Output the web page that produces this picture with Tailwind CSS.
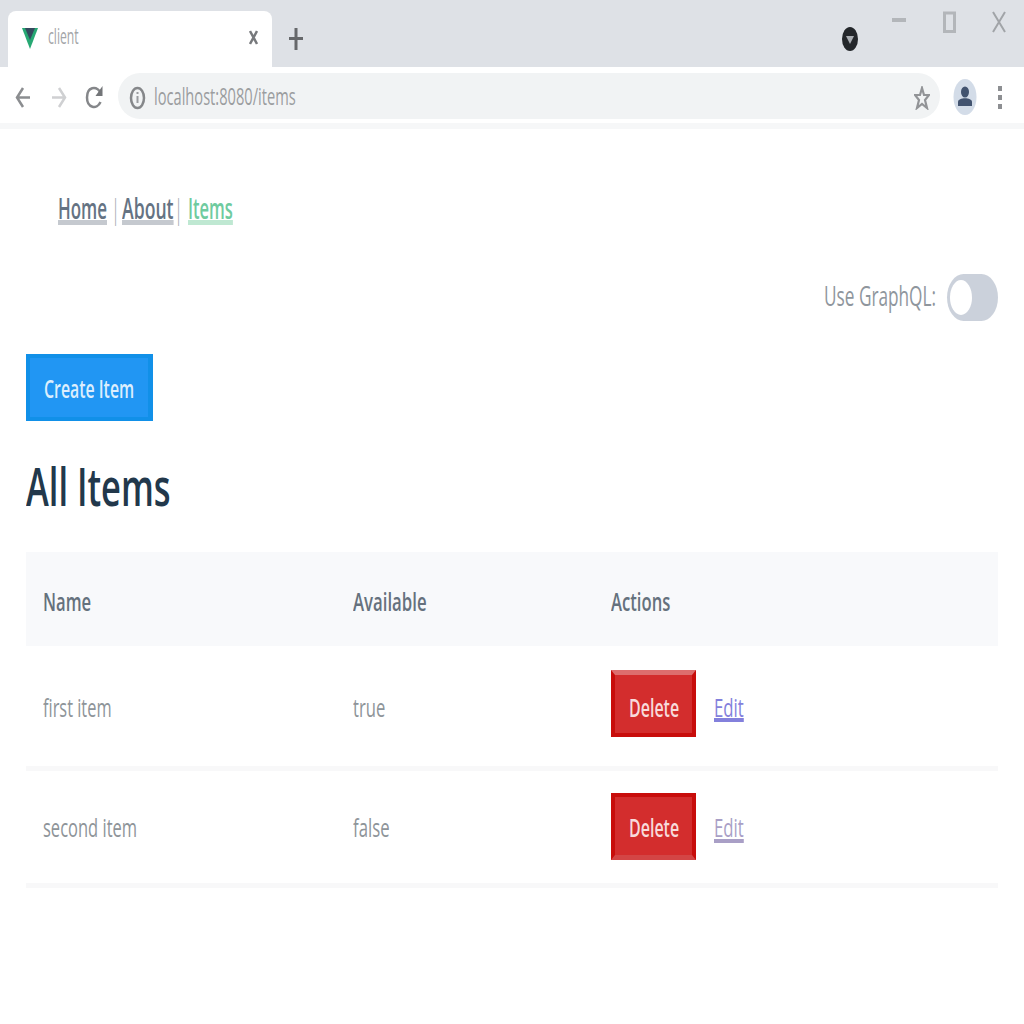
<!DOCTYPE html>
<html lang="en">
<head>
<meta charset="utf-8">
<title>client</title>
<script src="https://cdn.jsdelivr.net/npm/@tailwindcss/browser@4"></script>
</head>
<body class="w-[1024px] h-[1024px] overflow-hidden bg-white font-['Open_Sans',sans-serif] text-[#2c3e50] whitespace-nowrap">
<header>
  <div class="h-[67px] bg-[#dee1e6] flex items-start">
    <div class="mt-[11px] ml-2 w-[264px] h-14 bg-white rounded-t-lg flex items-center pl-[14px]">
      <svg class="w-4 h-[22px]" viewBox="0 0 16 22" preserveAspectRatio="none"><path d="M0 0h16L8 21z" fill="#27a873"/><path d="M3 0h10L8 12z" fill="#35495e"/></svg>
      <div class="ml-[10px] -mt-1 w-[31px] text-[21px] text-[#a3a5a8]"><span class="inline-block origin-left scale-x-[.58]">client</span></div>
      <svg class="ml-[170px] -mt-1 w-[9px] h-[15px]" viewBox="0 0 9 15"><path d="M1 1l7 13M8 1L1 14" stroke="#77797c" stroke-width="2.500"/></svg>
    </div>
    <svg class="ml-[17px] mt-[28px] w-[14px] h-[22px]" viewBox="0 0 14 22"><path d="M7 0v22M0 10.500h14" stroke="#66686b" stroke-width="3"/></svg>
    <svg class="ml-[539px] mt-[27px] w-4 h-6" viewBox="0 0 16 24"><ellipse cx="8" cy="12" rx="8" ry="12" fill="#24272b"/><path d="M4 9h8l-4 8z" fill="#a9adb2"/></svg>
    <svg class="ml-[34px] mt-[17px] w-[14px] h-[6px]" viewBox="0 0 14 6"><path d="M0 3h14" stroke="#b3b6ba" stroke-width="4"/></svg>
    <svg class="ml-[37px] mt-[11px] w-[14px] h-[23px]" viewBox="0 0 14 23"><rect x="1.500" y="2" width="10" height="18.500" fill="none" stroke="#b3b6ba" stroke-width="3"/></svg>
    <svg class="ml-[35px] mt-[11px] w-[14px] h-[22px]" viewBox="0 0 14 22"><path d="M1 1l12 20M13 1L1 21" stroke="#a1a4a8" stroke-width="2"/></svg>
  </div>
  <div class="h-[62px] border-b-[6px] border-[#f6f7f8] flex items-center">
    <svg class="ml-[15px] mt-1 w-[15px] h-[23px]" viewBox="0 0 15 23"><path d="M15 11.500H2M8 2L2 11.500 8 21" fill="none" stroke="#8b8d90" stroke-width="2.500"/></svg>
    <svg class="ml-[22px] mt-1 w-[15px] h-[23px]" viewBox="0 0 15 23"><path d="M0 11.500h13M7 2l6 9.500L7 21" fill="none" stroke="#cfd0d2" stroke-width="2.500"/></svg>
    <svg class="ml-[18px] mt-1 w-[18px] h-[25px]" viewBox="0 0 18 25"><path d="M15.500 17C12 25 2 23 2 12.500S11 0 16 8" fill="none" stroke="#85878a" stroke-width="2.500"/><path d="M17.500 1v10H10.500z" fill="#737578"/></svg>
    <div class="ml-[15px] mt-px w-[822px] h-[46px] bg-[#f1f3f4] rounded-[22px/23px] flex items-center">
      <svg class="ml-[11px] mt-1 w-[17px] h-[24px]" viewBox="0 0 17 24"><ellipse cx="8.500" cy="12" rx="6.500" ry="10" fill="none" stroke="#85878a" stroke-width="2.500"/><path d="M8.500 10v7M8.500 6v2" stroke="#9a9c9f" stroke-width="2"/></svg>
      <div class="ml-[8px] w-[142px] text-[24px] text-[#9b9d9f]"><span class="inline-block origin-left scale-x-[.61]">localhost:8080/items</span></div>
      <svg class="ml-[618px] mt-1 w-[16px] h-6" viewBox="0 0 16 24"><path d="M8 2l2 7h5l-4 5 2 8-5-4-5 4 2-8-4-5h5z" fill="none" stroke="#929497" stroke-width="2.200"/></svg>
    </div>
    <svg class="ml-[13px] mt-1 w-6 h-9" viewBox="0 0 24 36"><ellipse cx="12" cy="18" rx="11.500" ry="18" fill="#d3dce8"/><ellipse cx="12" cy="13" rx="4" ry="5.500" fill="#42536f"/><path d="M5 27v-4c0-5 14-5 14 0v4z" fill="#42536f"/></svg>
    <svg class="ml-[21px] mt-1 w-[5px] h-6" viewBox="0 0 5 24"><path d="M0 1h4v5H0zM0 10h4v5H0zM0 19h4v5H0z" fill="#8d8f92"/></svg>
  </div>
</header>
<main class="px-[26px]">
  <nav class="h-10 mt-[59px] ml-8 flex items-center text-[28px] font-semibold text-[#657383]">
    <a class="w-[49px]"><span class="inline-block origin-left scale-x-[.605] underline decoration-[#c5c9cf] decoration-[5px] underline-offset-[1px]">Home</span></a>
    <span class="ml-[4px] w-[11px] font-light text-[#9aa3ad]"><span class="inline-block origin-left scale-x-[.6]">|</span></span>
    <a class="w-[51px]"><span class="inline-block origin-left scale-x-[.63] underline decoration-[#c5c9cf] decoration-[5px] underline-offset-[1px]">About</span></a>
    <span class="ml-px w-[14px] font-light text-[#9aa3ad]"><span class="inline-block origin-left scale-x-[.6]">|</span></span>
    <a class="w-[45px] text-[#6fcb9f]"><span class="inline-block origin-left scale-x-[.59] underline decoration-[#bfe8d2] decoration-[5px] underline-offset-[1px]">Items</span></a>
  </nav>
  <div class="mt-[45px] h-[48px] flex justify-end items-center text-[28px] text-[#8f969d]">
    <div class="w-[123px] -mt-1"><span class="inline-block origin-left scale-x-[.615]">Use GraphQL:</span></div>
    <div class="w-[51px] h-[47px] rounded-[17px/24px] bg-[#cbd1db] flex items-center pl-[3px]"><div class="w-[22px] h-[35px] bg-white rounded-[50%]"></div></div>
  </div>
  <button class="mt-[33px] block w-[127px] h-[67px] bg-[#2196f3] border-[4px] border-r-[5px] border-[#1190e8] pl-[14px] pt-[2px] text-left text-[26px] font-semibold text-[#dceefd]"><span class="inline-block origin-left scale-x-[.61]">Create Item</span></button>
  <h1 class="mt-[29px] h-[72px] flex items-center text-[53px] font-semibold text-[#22384b]"><span class="inline-block origin-left scale-x-[.65]">All Items</span></h1>
  <table class="mt-[30px] w-[972px] table-fixed border-collapse text-left text-[26px] text-[#8e9499]">
    <colgroup><col class="w-[310px]"><col class="w-[258px]"><col></colgroup>
    <thead class="bg-[#f8f9fb] text-[#65717d]">
      <tr class="h-[94px]">
        <th class="pl-[17px] pt-1 font-semibold"><span class="inline-block origin-left scale-x-[.64]">Name</span></th>
        <th class="pl-[17px] pt-1 font-semibold"><span class="inline-block origin-left scale-x-[.645]">Available</span></th>
        <th class="pl-[17px] pt-1 font-semibold"><span class="inline-block origin-left scale-x-[.64]">Actions</span></th>
      </tr>
    </thead>
    <tbody>
      <tr class="h-[122px] border-b-[5px] border-[#f8f8f9]">
        <td class="pl-[17px] pt-1"><span class="inline-block origin-left scale-x-[.63]">first item</span></td>
        <td class="pl-[17px] pt-1"><span class="inline-block origin-left scale-x-[.64]">true</span></td>
        <td class="pl-[17px] pb-[5px]"><div class="flex items-center">
          <button class="w-[85px] h-[67px] bg-[#d32d2d] border-[4px] border-t-[5px] border-[#c80d0b] border-t-[#dd6e6e] pl-[14px] pt-2 text-left font-semibold text-[#f8dada]"><span class="inline-block origin-left scale-x-[.615]">Delete</span></button>
          <a class="ml-[18px] mt-2 w-[30px] text-[#8380dc]"><span class="inline-block origin-left scale-x-[.645] underline decoration-[4px] underline-offset-[1px]">Edit</span></a>
        </div></td>
      </tr>
      <tr class="h-[117px] border-b-[5px] border-[#f8f8f9]">
        <td class="pl-[17px] pt-[2px]"><span class="inline-block origin-left scale-x-[.635]">second item</span></td>
        <td class="pl-[17px] pt-[2px]"><span class="inline-block origin-left scale-x-[.645]">false</span></td>
        <td class="pl-[17px]"><div class="flex items-center">
          <button class="w-[85px] h-[67px] bg-[#d32d2d] border-[4px] border-b-[5px] border-[#c80d0b] border-b-[#d34545] pl-[14px] pt-[2px] text-left font-semibold text-[#f8dada]"><span class="inline-block origin-left scale-x-[.615]">Delete</span></button>
          <a class="ml-[18px] mt-[2px] w-[30px] text-[#a99fc6]"><span class="inline-block origin-left scale-x-[.645] underline decoration-[4px] underline-offset-[2px]">Edit</span></a>
        </div></td>
      </tr>
    </tbody>
  </table>
</main>
</body>
</html>
